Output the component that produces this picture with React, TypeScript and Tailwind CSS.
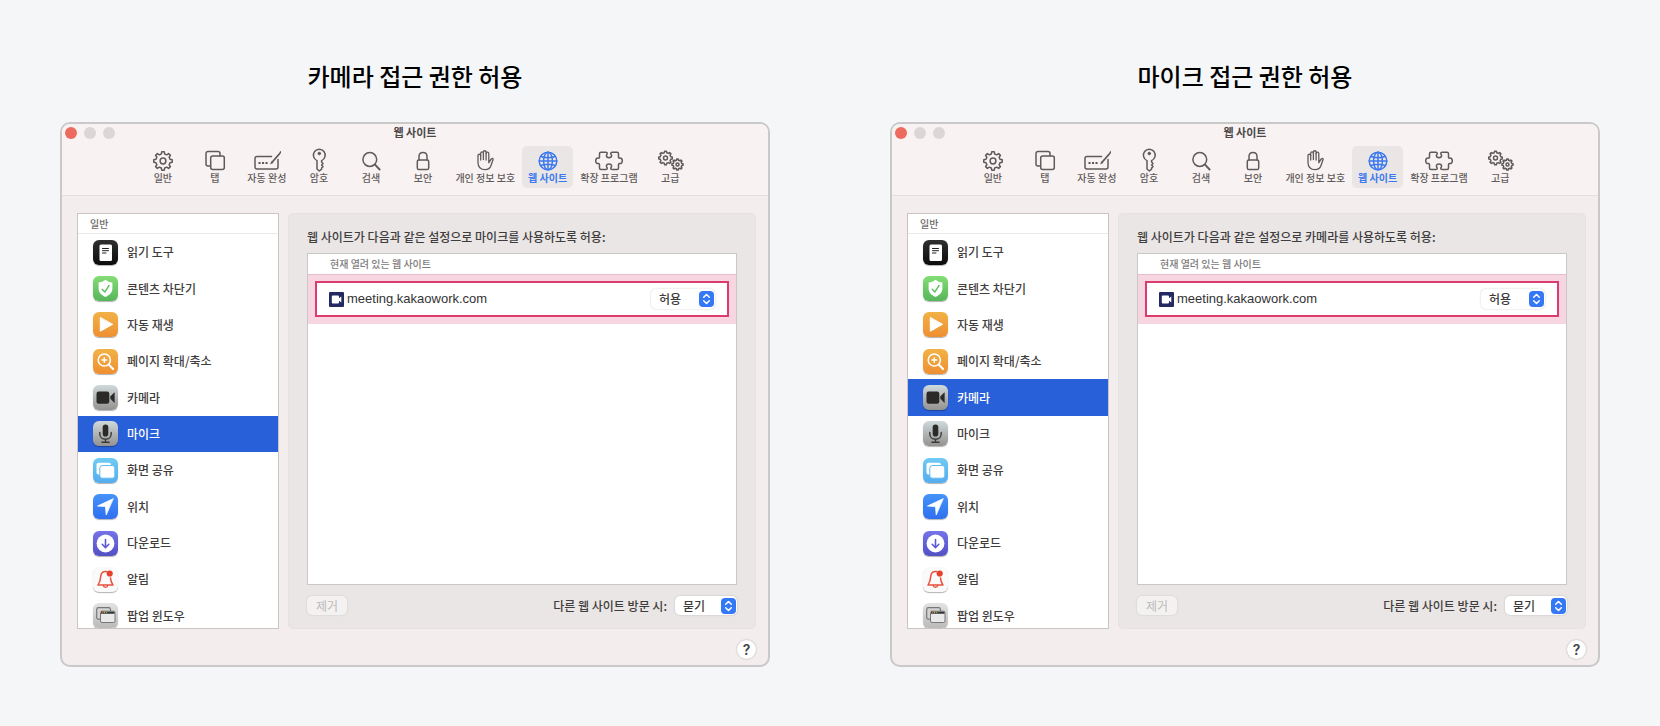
import type { ReactNode } from "react";

type SiteKey = "camera" | "mic";

// outline of a cog wheel with rounded teeth
const cogPath = (cx: number, cy: number, outer: number, inner: number) => {
  const teeth = 8;
  const step = (Math.PI * 2) / teeth;
  const points: string[] = [];
  for (let i = 0; i < teeth; i++) {
    const mid = i * step;
    [
      [mid - step * 0.3, inner],
      [mid - step * 0.17, outer],
      [mid + step * 0.17, outer],
      [mid + step * 0.3, inner],
    ].forEach(([angle, r]) => {
      points.push(`${(cx + Math.cos(angle) * r).toFixed(2)} ${(cy + Math.sin(angle) * r).toFixed(2)}`);
    });
  }
  return `M${points.join("L")}Z`;
};

const ToolIcon = ({ children, wide }: { children: ReactNode; wide?: boolean }) => (
  <svg
    viewBox={wide ? "0 0 28 24" : "0 0 24 24"}
    className={wide ? "h-6 w-7" : "size-6"}
    fill="none"
    stroke="currentColor"
    strokeWidth="1.5"
    strokeLinecap="round"
    strokeLinejoin="round"
    aria-hidden="true"
  >
    {children}
  </svg>
);

const tools: { label: string; icon: ReactNode; active?: boolean }[] = [
  {
    label: "일반",
    icon: (
      <ToolIcon>
        <path d={cogPath(12, 13, 9.3, 7.2)} />
        <circle cx="12" cy="13" r="2.9" />
      </ToolIcon>
    ),
  },
  {
    label: "탭",
    icon: (
      <ToolIcon>
        <path d="M7.500 18H5a2 2 0 0 1-2-2V5.500a2 2 0 0 1 2-2h10a2 2 0 0 1 2 2v2.300" />
        <rect x="7.700" y="8" width="13.600" height="13.600" rx="2" />
      </ToolIcon>
    ),
  },
  {
    label: "자동 완성",
    icon: (
      <ToolIcon wide>
        <path d="M18.500 8.500H4a2 2 0 0 0-2 2V19a2 2 0 0 0 2 2h19a2 2 0 0 0 2-2v-7.500" />
        <path d="M19.300 14l7-8M27.300 4.600l.6-.7" strokeWidth="1.800" />
        <path d="M17.800 15.500l1-2 1 .9z" strokeWidth="0.800" fill="currentColor" />
        <path d="M6.500 15h.1M10 15h.1M13.500 15h.1" strokeWidth="2" strokeLinecap="square" />
      </ToolIcon>
    ),
  },
  {
    label: "암호",
    icon: (
      <ToolIcon>
        <path d="M10 12.600a5.900 5.900 0 1 1 4.600 0v1.400l1.400 1.500-1.400 1.500 1.400 1.600-1.400 1.400v1.200L12.300 23 10 21z" />
        <circle cx="12.300" cy="5.500" r="1.300" fill="currentColor" strokeWidth="1" />
      </ToolIcon>
    ),
  },
  {
    label: "검색",
    icon: (
      <ToolIcon>
        <circle cx="10.800" cy="11.500" r="6.900" />
        <path d="M16 16.700l4.600 4.800" strokeWidth="1.900" />
      </ToolIcon>
    ),
  },
  {
    label: "보안",
    icon: (
      <ToolIcon>
        <rect x="6.300" y="12" width="11.400" height="9.500" rx="1.600" />
        <path d="M8 12V8.500C8 6.200 9.700 4.500 12 4.500s4 1.700 4 4V12" />
      </ToolIcon>
    ),
  },
  {
    label: "개인 정보 보호",
    icon: (
      <ToolIcon>
        <path
          d="M5 14.500V7.600a1.350 1.350 0 0 1 2.700 0V5.200a1.350 1.350 0 0 1 2.700 0V4.100a1.350 1.350 0 0 1 2.700 0v1.300a1.350 1.350 0 0 1 2.700 0v9.400c1-1.800 1.800-3 2.500-3.800 1.200-1.200 2.200-.5 1.700.8L18 17.500c-1 2.800-2.700 4.200-5.800 4.200-4.700 0-7.200-2.500-7.200-7.200z"
          strokeWidth="1.300"
        />
        <path d="M7.700 12V7.500M10.400 11.500V5M13.100 12V5.500" strokeWidth="1.300" />
      </ToolIcon>
    ),
  },
  {
    label: "웹 사이트",
    active: true,
    icon: (
      <ToolIcon>
        <circle cx="12" cy="13" r="8.800" />
        <ellipse cx="12" cy="13" rx="4.400" ry="8.800" />
        <path d="M12 4.200v17.600M3.200 13h17.600M4.800 8.500c4 1.300 10.400 1.300 14.400 0M4.800 17.500c4-1.300 10.400-1.300 14.400 0" />
      </ToolIcon>
    ),
  },
  {
    label: "확장 프로그램",
    icon: (
      <ToolIcon wide>
        <path d="M6 4.300h4.800c1 0 1.500.5 1.500 1.300 0 .7-.9.900-.9 2 0 1.400 1.100 2.200 2.600 2.200s2.600-.8 2.600-2.200c0-1.100-.9-1.300-.9-2 0-.8.5-1.300 1.500-1.300H22c1 0 1.500.5 1.500 1.500v3.100c0 .9.500 1.400 1.200 1.200 1.500-.4 2.600.9 2.600 2.700s-1.100 3.100-2.600 2.700c-.7-.2-1.200.3-1.200 1.200v3.400c0 1-.5 1.500-1.500 1.500h-4.800c-1 0-1.500-.5-1.500-1.300 0-.7.900-.9.900-2 0-1.400-1.100-2.200-2.600-2.200s-2.600.8-2.600 2.200c0 1.100.9 1.300.9 2 0 .8-.5 1.300-1.500 1.300H6c-1 0-1.500-.5-1.500-1.500v-3.400c0-.9-.5-1.400-1.200-1.200-1.500.4-2.600-.9-2.600-2.700s1.100-3.100 2.600-2.700c.7.2 1.200-.3 1.200-1.200V5.800c0-1 .5-1.500 1.500-1.500z" />
      </ToolIcon>
    ),
  },
  {
    label: "고급",
    icon: (
      <ToolIcon wide>
        <path d={cogPath(9.5, 10, 6.8, 5.4)} />
        <circle cx="9.500" cy="10" r="2" />
        <path d={cogPath(21.5, 16.5, 5.6, 4.4)} />
        <circle cx="21.500" cy="16.500" r="1.500" />
      </ToolIcon>
    ),
  },
];

const Tile = ({ tone, children }: { tone: string; children: ReactNode }) => (
  <span className={`block size-[25px] shrink-0 overflow-hidden rounded-[6px] shadow-[0_1px_1px_rgba(0,0,0,0.3)] ${tone}`}>
    <svg viewBox="0 0 25 25" className="size-full" fill="none" strokeLinecap="round" strokeLinejoin="round" aria-hidden="true">
      {children}
    </svg>
  </span>
);

const categories: { key: string; label: string; icon: ReactNode }[] = [
  {
    key: "reader",
    label: "읽기 도구",
    icon: (
      <Tile tone="bg-linear-to-b from-[#303030] to-[#0c0c0c]">
        <rect x="6.500" y="4.500" width="12.500" height="16.500" rx="1.500" fill="#fff" />
        <path d="M9.500 8.500h6M9.500 10.700h6M9.500 13h3.500" stroke="#222" strokeWidth="1" />
      </Tile>
    ),
  },
  {
    key: "blocker",
    label: "콘텐츠 차단기",
    icon: (
      <Tile tone="bg-linear-to-b from-[#84dd75] to-[#57b65a]">
        <path d="M12.500 3.800c2 1.600 4.300 2.500 6.900 2.700v6c0 3.800-2.600 6.500-6.900 8.500-4.300-2-6.900-4.700-6.900-8.500v-6c2.600-.2 4.900-1.100 6.900-2.700z" fill="#fff" />
        <path d="M9.200 13.300l2.600 2.800 4.200-6.600" stroke="#5cc060" strokeWidth="1.400" />
      </Tile>
    ),
  },
  {
    key: "autoplay",
    label: "자동 재생",
    icon: (
      <Tile tone="bg-linear-to-b from-[#f1b246] to-[#ee8f32]">
        <path d="M7.300 5.800v13.400L19.300 12.500z" fill="#fff" stroke="#fff" strokeWidth="1" />
      </Tile>
    ),
  },
  {
    key: "zoom",
    label: "페이지 확대/축소",
    icon: (
      <Tile tone="bg-linear-to-b from-[#f1b246] to-[#ee8f32]">
        <circle cx="11.300" cy="11" r="6.100" stroke="#fff" strokeWidth="1.500" />
        <path d="M15.900 15.800l4.200 4.200" stroke="#fff" strokeWidth="2.200" />
        <path d="M11.300 8.700v4.600M9 11h4.600" stroke="#fff" strokeWidth="1.500" />
      </Tile>
    ),
  },
  {
    key: "camera",
    label: "카메라",
    icon: (
      <Tile tone="bg-linear-to-b from-[#cfd9dc] to-[#949290]">
        <rect x="3.500" y="6.500" width="12.800" height="12.300" rx="2.200" fill="#2b2a29" />
        <path d="M17.800 11.300l3.500-3.500v9.700l-3.500-3.500z" fill="#2b2a29" stroke="#2b2a29" strokeWidth="0.600" />
      </Tile>
    ),
  },
  {
    key: "mic",
    label: "마이크",
    icon: (
      <Tile tone="bg-linear-to-b from-[#cfd9dc] to-[#949290]">
        <rect x="9.700" y="3.500" width="5.600" height="12" rx="2.800" fill="#2b2a29" />
        <path d="M6.800 11.500v1.500c0 3 2.400 5.200 5.700 5.200s5.700-2.200 5.700-5.200v-1.500M12.500 18.200V21M8.900 21.200h7.200" stroke="#3a3938" strokeWidth="1.400" />
      </Tile>
    ),
  },
  {
    key: "screen",
    label: "화면 공유",
    icon: (
      <Tile tone="bg-linear-to-b from-[#6fcbf4] to-[#55acee]">
        <rect x="3.500" y="4.800" width="14.500" height="11.700" rx="2" fill="#fff" />
        <rect x="6.800" y="7.500" width="15" height="12.700" rx="2.500" fill="#fff" stroke="#62bcf1" strokeWidth="1" />
      </Tile>
    ),
  },
  {
    key: "location",
    label: "위치",
    icon: (
      <Tile tone="bg-linear-to-b from-[#4693f8] to-[#2f6ff0]">
        <path d="M20 4.800L4.500 12l8 .6.7 8z" fill="#fff" stroke="#fff" strokeWidth="0.800" />
      </Tile>
    ),
  },
  {
    key: "download",
    label: "다운로드",
    icon: (
      <Tile tone="bg-linear-to-b from-[#7673ea] to-[#5350c4]">
        <circle cx="12.500" cy="12.500" r="8.900" fill="#fff" />
        <path d="M12.500 8.500v8M9.200 13.300l3.300 3.400 3.300-3.400" stroke="#5c59d6" strokeWidth="1.600" />
      </Tile>
    ),
  },
  {
    key: "notification",
    label: "알림",
    icon: (
      <Tile tone="bg-[#fafafa]">
        <path d="M13.500 4.600c-3.500-.6-5.400 1.400-5.700 4.300-.3 4.500-.8 6.300-2.800 9.200h15c-1.600-2.300-2.300-4.200-2.500-7" stroke="#e8503f" strokeWidth="1.500" />
        <path d="M10.300 18.500c.3 2.400 4.100 2.400 4.400 0" stroke="#e8503f" strokeWidth="1.400" />
        <circle cx="16.700" cy="6.500" r="3.100" fill="#e8402f" />
      </Tile>
    ),
  },
  {
    key: "popup",
    label: "팝업 윈도우",
    icon: (
      <Tile tone="bg-linear-to-b from-[#e2e3e2] to-[#b9bab9]">
        <rect x="3.700" y="4.700" width="13.800" height="11.500" rx="1.800" fill="#d2d3d2" stroke="#777" strokeWidth="1.200" />
        <rect x="7.500" y="8.200" width="14.500" height="11.300" rx="1.500" fill="#e9e9e9" stroke="#777" strokeWidth="1" />
        <path d="M8 8.700h13.500v2H8z" fill="#333" />
        <path d="M9.300 9.500h.1" stroke="#e8503f" strokeWidth="1.400" />
        <path d="M11.400 9.500h.1" stroke="#e0a030" strokeWidth="1.400" />
        <path d="M13.500 9.500h.1" stroke="#4bb550" strokeWidth="1.400" />
      </Tile>
    ),
  },
];

const PopupSelect = ({ id, label, value, size }: { id: string; label?: string; value: string; size: string }) => (
  <span className="relative block">
    <select
      id={id}
      aria-label={label}
      defaultValue={value}
      className={`block appearance-none rounded-[5px] bg-white pl-2 leading-4 font-medium text-[#3c3a3a] shadow-[0_0_2px_rgba(0,0,0,0.22)] ${size}`}
    >
      <option>묻기</option>
      <option>거부</option>
      <option>허용</option>
    </select>
    <svg
      viewBox="0 0 15 16"
      className="pointer-events-none absolute top-1/2 right-px h-4 w-[15px] -translate-y-1/2 rounded-[4px] bg-[#3478f6]"
      fill="none"
      stroke="#fff"
      strokeWidth="1.5"
      strokeLinecap="round"
      strokeLinejoin="round"
      aria-hidden="true"
    >
      <path d="M4.700 6.300L7.500 3.500l2.800 2.800M4.700 9.700l2.800 2.800 2.800-2.800" />
    </svg>
  </span>
);

const SafariWindow = ({ selected, target }: { selected: SiteKey; target: string }) => (
  <section className="overflow-hidden rounded-[10px] border-2 border-[#cac8c8] bg-[#f3eded]">
    <header className="border-b border-[#e4dfdf] bg-[#f8f2f2] pb-[7px]">
      <div className="grid h-5 grid-cols-[1fr_auto_1fr] items-start px-[3px]">
        <div className="flex gap-[7px] pt-[3px]">
          <button type="button" aria-label="닫기" className="size-3 rounded-full bg-[#ec6a5e]" />
          <button type="button" aria-label="최소화" className="size-3 rounded-full bg-[#dcd7d7]" />
          <button type="button" aria-label="확대" className="size-3 rounded-full bg-[#dcd7d7]" />
        </div>
        <h2 className="text-[11px] leading-4 font-bold text-[#4a4747]">웹 사이트</h2>
      </div>
      <nav className="mt-0.5 flex justify-center gap-px pl-[3px]">
        {tools.map(tool => (
          <button
            key={tool.label}
            type="button"
            className={`flex h-[42px] min-w-[51px] flex-col items-center rounded-[5px] px-1.5 pt-0.5 text-[10px] leading-3 whitespace-nowrap ${
              tool.active ? "bg-[#ebe6e6] font-bold text-[#3c78ee]" : "font-medium text-[#5f5b5b]"
            }`}
          >
            {tool.icon}
            {tool.label}
          </button>
        ))}
      </nav>
    </header>

    <div className="flex h-[433px] gap-[9px] pt-[17px] pr-3 pl-[15px]">
      <aside className="w-[202px] shrink-0 overflow-hidden border border-[#c9c5c5] bg-white">
        <h3 className="h-5 border-b border-[#e9e9e9] pl-3 text-[10px] leading-5 font-medium text-[#6c6a6a]">일반</h3>
        <ul className="flex h-[400px] flex-col">
          {categories.map(item => (
            <li key={item.key} className="flex-1">
              <button
                type="button"
                className={`flex size-full items-center gap-[9px] pl-[15px] text-left font-medium ${
                  item.key === selected ? "bg-[#2860d9] text-white" : "text-[#3f3d3d]"
                }`}
              >
                {item.icon}
                {item.label}
              </button>
            </li>
          ))}
        </ul>
      </aside>

      <main className="flex min-w-0 flex-1 flex-col rounded-[5px] border border-[#e6e2e1] bg-[#eae6e5] px-[18px] pb-[13px]">
        <p className="pt-[15px] pb-2 leading-4 font-medium text-[#3f3d3d]">
          웹 사이트가 다음과 같은 설정으로 {target} 사용하도록 허용:
        </p>
        <div className="min-h-0 flex-1 border border-[#c9c7c7] bg-white">
          <h3 className="h-5 pl-[22px] text-[10px] leading-5 font-medium text-[#7d7b7b]">현재 열려 있는 웹 사이트</h3>
          <div className="border-t border-[#e3bfc9] bg-[#f8d6e1] px-[7px] pt-1.5 pb-[7px]">
            <div className="flex h-9 items-center border-2 border-[#dc3b6d] bg-white px-3">
              <svg viewBox="0 0 15 15" className="size-[15px] shrink-0" aria-hidden="true">
                <rect width="15" height="15" rx="1" fill="#232a62" />
                <path d="M3.800 3.500h5.200q1 0 1 1v1.800l2.300-1.800v6l-2.300-1.800v1.800q0 1-1 1H3.800q-1 0-1-1v-6q0-1 1-1z" fill="#fff" />
              </svg>
              <span className="ml-[3px] flex-1 font-['Liberation_Sans',Arial,sans-serif] text-[13px] leading-4 text-[#333]">
                meeting.kakaowork.com
              </span>
              <PopupSelect id={`${selected}-site`} label="meeting.kakaowork.com" value="허용" size="h-5 w-16" />
            </div>
          </div>
        </div>
        <div className="mt-[11px] flex items-center justify-between">
          <button type="button" disabled className="h-[19px] w-10 rounded-[5px] bg-[#f4f2f1] leading-4 text-[#bdbaba] shadow-[0_0_2px_rgba(0,0,0,0.15)]">
            제거
          </button>
          <div className="flex items-center gap-2">
            <label htmlFor={`${selected}-other`} className="font-medium text-[#3f3d3d]">
              다른 웹 사이트 방문 시:
            </label>
            <PopupSelect id={`${selected}-other`} value="묻기" size="h-[19px] w-[62px]" />
          </div>
        </div>
      </main>
    </div>

    <footer className="flex h-9 items-center justify-end pt-1 pr-3">
      <button
        type="button"
        aria-label="도움말"
        className="size-[19px] rounded-full bg-white font-['Inter',sans-serif] text-[14px] leading-[19px] font-semibold text-[#444] shadow-[0_0_2px_rgba(0,0,0,0.3)]"
      >
        ?
      </button>
    </footer>
  </section>
);

const guides: { title: string; selected: SiteKey; target: string }[] = [
  { title: "카메라 접근 권한 허용", selected: "mic", target: "마이크를" },
  { title: "마이크 접근 권한 허용", selected: "camera", target: "카메라를" },
];

const App = () => (
  <div className="grid min-h-screen grid-cols-2 items-start bg-[#f4f6f8] pt-[58px] font-['Noto_Sans_CJK_KR',sans-serif] text-[12px]">
    {guides.map(guide => (
      <article key={guide.title} className="px-[60px]">
        <h1 className="mb-7 text-center text-2xl leading-9 font-medium text-black">{guide.title}</h1>
        <SafariWindow selected={guide.selected} target={guide.target} />
      </article>
    ))}
  </div>
);

export default App;
